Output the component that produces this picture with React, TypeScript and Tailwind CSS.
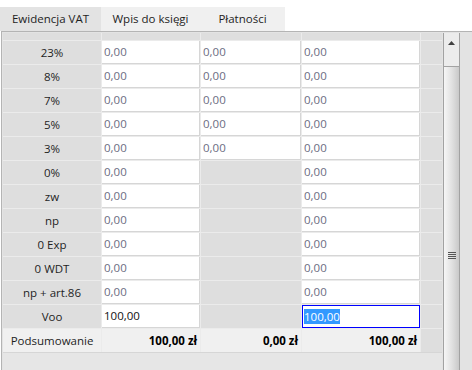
import React from "react";

type Row = {
  label: string;
  c1: string;
  c2: string | null;
  c3: string;
  dark?: boolean;
  selected?: boolean;
};

const rows: Row[] = [
  { label: "23%", c1: "0,00", c2: "0,00", c3: "0,00" },
  { label: "8%", c1: "0,00", c2: "0,00", c3: "0,00" },
  { label: "7%", c1: "0,00", c2: "0,00", c3: "0,00" },
  { label: "5%", c1: "0,00", c2: "0,00", c3: "0,00" },
  { label: "3%", c1: "0,00", c2: "0,00", c3: "0,00" },
  { label: "0%", c1: "0,00", c2: null, c3: "0,00" },
  { label: "zw", c1: "0,00", c2: null, c3: "0,00" },
  { label: "np", c1: "0,00", c2: null, c3: "0,00" },
  { label: "0 Exp", c1: "0,00", c2: null, c3: "0,00" },
  { label: "0 WDT", c1: "0,00", c2: null, c3: "0,00" },
  { label: "np + art.86", c1: "0,00", c2: null, c3: "0,00" },
  { label: "Voo", c1: "100,00", c2: null, c3: "100,00", dark: true, selected: true },
];

const tabs = ["Ewidencja VAT", "Wpis do księgi", "Płatności"];

function ValueCell({ value, dark }: { value: string | null; dark?: boolean }) {
  if (value === null) return <div className="bg-[#dedede]" />;
  return (
    <div
      className={`bg-white border-r border-b border-[#d6d6d6] flex items-center pl-[2px] ${
        dark ? "text-[#111]" : "text-[#6c6c82]"
      }`}
    >
      {value}
    </div>
  );
}

export default function App() {
  return (
    <div
      className="w-[472px] h-[370px] bg-white overflow-hidden text-[11.5px] text-[#1e1e1e]"
      style={{ fontFamily: '"Open Sans", "Noto Sans", sans-serif' }}
    >
      {/* Tabs */}
      <div className="flex pt-[7px] h-[31px]">
        {tabs.map((t, i) => (
          <div
            key={t}
            className={`h-[24px] flex items-center justify-center ${
              i === 0 ? "w-[101px] bg-[#e3e3e3]" : i === 1 ? "w-[99px] bg-[#f0f0f0]" : "w-[85px] bg-[#f0f0f0]"
            }`}
          >
            {t}
          </div>
        ))}
      </div>

      {/* Panel */}
      <div className="flex h-[339px] bg-[#e3e3e3] ml-px border-l border-t border-[#b4b4b4] pt-px pl-px">
        <div className="flex flex-col">
          <div className="grid grid-cols-[98px_98px_100px_118px_21px] grid-rows-[7px] auto-rows-[23px] gap-px bg-[#ebebeb]">
            {/* header */}
            <div className="bg-[#dedede]" />
            <div className="bg-[#dedede]" />
            <div className="bg-[#dedede]" />
            <div className="bg-[#dedede]" />
            <div className="bg-[#dedede]" />

            {rows.map((r) => (
              <React.Fragment key={r.label}>
                <div className="bg-[#dedede] flex items-center justify-center">{r.label}</div>
                <ValueCell value={r.c1} dark={r.dark} />
                <ValueCell value={r.c2} />
                {r.selected ? (
                  <div className="bg-white border border-[#0000ff] flex items-center pl-px">
                    <span className="bg-[#3399ff] text-white leading-[15px]">{r.c3}</span>
                  </div>
                ) : (
                  <ValueCell value={r.c3} />
                )}
                <div className="bg-[#dedede]" />
              </React.Fragment>
            ))}

            {/* summary */}
            <div className="bg-[#f0f0f0] flex items-center justify-center">Podsumowanie</div>
            <div className="bg-[#f0f0f0] flex items-center justify-end pr-[3px] font-bold text-black">100,00 zł</div>
            <div className="bg-[#f0f0f0] flex items-center justify-end pr-[3px] font-bold text-black">0,00 zł</div>
            <div className="bg-[#f0f0f0] flex items-center justify-end pr-[3px] font-bold text-black">100,00 zł</div>
            <div className="bg-[#dedede]" />
          </div>
          <div className="flex-1 bg-[#e6e6e6] border-t border-[#d6d6d6]" />
        </div>

        {/* Scrollbar */}
        <div className="ml-[1px] w-[17px] border-x border-[#a2a2a2] flex flex-col">
          <div className="h-[33px] bg-[#ececec] flex justify-center pt-[8px]">
            <svg width="7" height="4" viewBox="0 0 7 4">
              <path d="M3.5 0 L7 4 L0 4 Z" fill="#404040" />
            </svg>
          </div>
          <div className="flex-1 border-t border-[#a2a2a2] bg-gradient-to-r from-[#f6f6f6] via-[#e2e2e2] to-[#c9c9c9] flex items-start justify-center pt-[185px]">
            <div className="flex flex-col gap-[1px] w-[8px]">
              <div className="h-px bg-[#555]" />
              <div className="h-px bg-[#555]" />
              <div className="h-px bg-[#555]" />
              <div className="h-px bg-[#555]" />
            </div>
          </div>
        </div>
        <div className="flex-1 bg-[#e3e3e3]" />
      </div>
    </div>
  );
}
